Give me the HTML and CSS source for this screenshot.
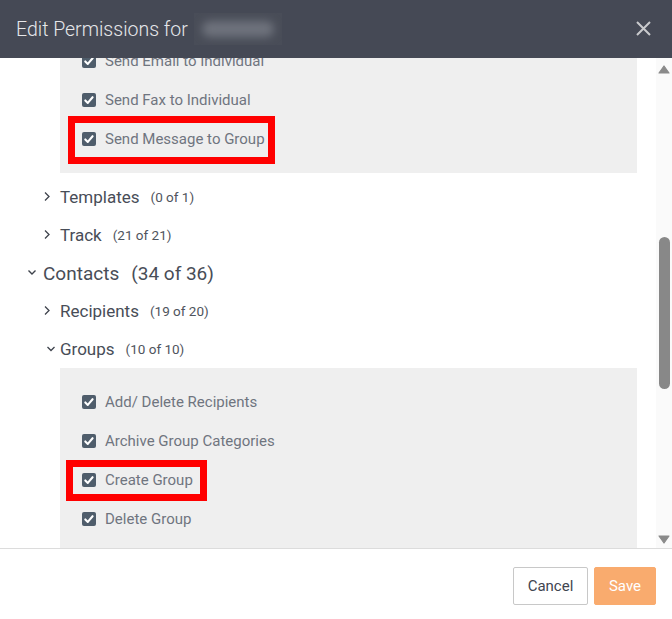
FILE: index.html
```html
<!DOCTYPE html>
<html>
<head>
<meta charset="utf-8">
<link rel="stylesheet" href="styles.css">
</head>
<body>
<div class="modal">
  <div class="header">
    <div class="title">Edit Permissions for <span class="redacted"><span class="blur"></span></span></div>
    <svg class="close" width="15" height="15" viewBox="0 0 15 15"><path d="M1 1L14 14M14 1L1 14" stroke="#c9cacd" stroke-width="2" fill="none"/></svg>
  </div>
  <div class="body">
    <div class="content">
      <div class="panel first">
        <div class="item"><span class="cb"><svg width="14" height="14" viewBox="0 0 14 14"><path d="M3.3 7.4L5.8 9.9L10.6 4.2" stroke="#fff" stroke-width="2.1" fill="none" stroke-linecap="round" stroke-linejoin="round"/></svg></span>Send Email to Individual</div>
        <div class="item"><span class="cb"><svg width="14" height="14" viewBox="0 0 14 14"><path d="M3.3 7.4L5.8 9.9L10.6 4.2" stroke="#fff" stroke-width="2.1" fill="none" stroke-linecap="round" stroke-linejoin="round"/></svg></span>Send Fax to Individual</div>
        <div class="item"><span class="mark mark-one"></span><span class="cb"><svg width="14" height="14" viewBox="0 0 14 14"><path d="M3.3 7.4L5.8 9.9L10.6 4.2" stroke="#fff" stroke-width="2.1" fill="none" stroke-linecap="round" stroke-linejoin="round"/></svg></span>Send Message to Group</div>
      </div>
      <div class="node lvl2 gap"><svg class="chev" width="12" height="12" viewBox="0 0 12 12"><path d="M2 1.5L6 5.5L2 9.5" stroke="#3e434c" stroke-width="1.3" fill="none"/></svg><span class="label">Templates</span><span class="count">(0 of 1)</span></div>
      <div class="node lvl2"><svg class="chev" width="12" height="12" viewBox="0 0 12 12"><path d="M2 1.5L6 5.5L2 9.5" stroke="#3e434c" stroke-width="1.3" fill="none"/></svg><span class="label">Track</span><span class="count">(21 of 21)</span></div>
      <div class="node lvl1"><svg class="chev" width="12" height="12" viewBox="0 0 12 12"><path d="M2.5 3.5L6 7L9.5 3.5" stroke="#3e434c" stroke-width="1.4" fill="none"/></svg><span class="label big">Contacts</span><span class="count big">(34 of 36)</span></div>
      <div class="node lvl2"><svg class="chev" width="12" height="12" viewBox="0 0 12 12"><path d="M2 1.5L6 5.5L2 9.5" stroke="#3e434c" stroke-width="1.3" fill="none"/></svg><span class="label">Recipients</span><span class="count">(19 of 20)</span></div>
      <div class="node lvl2"><svg class="chev" width="12" height="12" viewBox="0 0 12 12"><path d="M4.5 4L8 7.5L11.5 4" stroke="#3e434c" stroke-width="1.3" fill="none"/></svg><span class="label">Groups</span><span class="count">(10 of 10)</span></div>
      <div class="panel second">
        <div class="item"><span class="cb"><svg width="14" height="14" viewBox="0 0 14 14"><path d="M3.3 7.4L5.8 9.9L10.6 4.2" stroke="#fff" stroke-width="2.1" fill="none" stroke-linecap="round" stroke-linejoin="round"/></svg></span>Add/ Delete Recipients</div>
        <div class="item"><span class="cb"><svg width="14" height="14" viewBox="0 0 14 14"><path d="M3.3 7.4L5.8 9.9L10.6 4.2" stroke="#fff" stroke-width="2.1" fill="none" stroke-linecap="round" stroke-linejoin="round"/></svg></span>Archive Group Categories</div>
        <div class="item"><span class="mark mark-two"></span><span class="cb"><svg width="14" height="14" viewBox="0 0 14 14"><path d="M3.3 7.4L5.8 9.9L10.6 4.2" stroke="#fff" stroke-width="2.1" fill="none" stroke-linecap="round" stroke-linejoin="round"/></svg></span>Create Group</div>
        <div class="item"><span class="cb"><svg width="14" height="14" viewBox="0 0 14 14"><path d="M3.3 7.4L5.8 9.9L10.6 4.2" stroke="#fff" stroke-width="2.1" fill="none" stroke-linecap="round" stroke-linejoin="round"/></svg></span>Delete Group</div>
      </div>
    </div>
    <div class="scrollbar">
      <svg class="arrow-up" width="12" height="9" viewBox="0 0 12 9"><path d="M6 1L11 8H1Z" fill="#8a8a8a" stroke="#8a8a8a" stroke-width="1.2" stroke-linejoin="round"/></svg>
      <div class="thumb"></div>
      <div class="spacer"></div>
      <svg class="arrow-down" width="12" height="9" viewBox="0 0 12 9"><path d="M1 1H11L6 8Z" fill="#8a8a8a" stroke="#8a8a8a" stroke-width="1.2" stroke-linejoin="round"/></svg>
    </div>
  </div>
  <div class="footer">
    <button class="btn cancel">Cancel</button>
    <button class="btn save">Save</button>
  </div>
</div>
</body>
</html>
```
FILE: styles.css
```css
* { box-sizing: border-box; }
html, body { margin: 0; padding: 0; background: #fff; }
body { font-family: Roboto, "Liberation Sans", sans-serif; }

.modal {
  width: 672px;
  height: 619px;
  display: flex;
  flex-direction: column;
  overflow: hidden;
}

.header {
  height: 58px;
  flex: none;
  background: #454955;
  display: flex;
  align-items: center;
  justify-content: space-between;
  padding: 0 21px 0 16px;
}
.title {
  color: #e6e7ea;
  font-size: 19.5px;
  font-weight: 300;
  display: flex;
  align-items: center;
  white-space: pre;
}
.redacted {
  width: 88px;
  height: 32px;
  background: #494d58;
  margin-left: 1px;
  overflow: hidden;
  display: flex;
  align-items: center;
  justify-content: center;
}
.blur {
  display: block;
  width: 72px;
  height: 16px;
  border-radius: 8px;
  background: #6e727c;
  filter: blur(4px);
}
.close { display: block; margin-top: -2px; }

.body {
  flex: 1;
  display: flex;
  min-height: 0;
  overflow: hidden;
}
.content {
  flex: 1;
  min-width: 0;
  overflow: hidden;
}

.panel {
  background: #efefef;
  margin: 0 19px 0 60px;
  padding: 0 0 15px 22px;
}
.panel.first { margin-top: -17px; }
.panel.second { padding-top: 14px; padding-bottom: 40px; }

.item {
  position: relative;
  height: 39px;
  display: flex;
  align-items: center;
  font-size: 15px;
  color: #6f757f;
}
.cb {
  width: 14px;
  height: 14px;
  border-radius: 2px;
  background: #4f5d6b;
  margin-right: 9px;
  flex: none;
}
.cb svg { display: block; }

.mark {
  position: absolute;
  border: 7px solid #ff0000;
}
.mark-one { left: -14px; top: -3px; width: 207px; height: 48px; }
.mark-two { left: -16px; top: 0; width: 141px; height: 41px; }

.node {
  height: 38px;
  display: flex;
  align-items: center;
  color: #484d57;
}
.node.gap { margin-top: 5px; }
.node.lvl1 { padding-left: 26px; }
.node.lvl2 { padding-left: 43px; }
.chev { flex: none; margin-right: 5px; margin-top: -1px; }
.label { font-size: 17px; }
.count { font-size: 13.5px; margin-left: 11px; color: #4f545d; }
.label.big { font-size: 19px; }
.count.big { font-size: 19px; margin-left: 12px; color: #484d57; }

.scrollbar {
  width: 16px;
  flex: none;
  background: #fafafa;
  display: flex;
  flex-direction: column;
  align-items: center;
}
.arrow-up { margin-top: 7px; flex: none; }
.thumb {
  width: 11px;
  height: 152px;
  margin-top: 163px;
  border-radius: 6px;
  background: #888888;
  flex: none;
}
.spacer { flex: 1; }
.arrow-down { margin-bottom: 4px; flex: none; }

.footer {
  height: 71px;
  flex: none;
  border-top: 1px solid #dcdcdc;
  display: flex;
  justify-content: flex-end;
  align-items: flex-start;
  padding: 18px 16px 0 0;
  gap: 6px;
}
.btn {
  height: 38px;
  font-family: Roboto, "Liberation Sans", sans-serif;
  font-size: 15px;
  border-radius: 2px;
  padding: 0;
}
.cancel {
  width: 75px;
  background: #fff;
  border: 1px solid #c8c8c8;
  color: #3f4550;
}
.save {
  width: 62px;
  background: #f9ab6e;
  border: 1px solid #f9ab6e;
  color: #fff;
}
```
